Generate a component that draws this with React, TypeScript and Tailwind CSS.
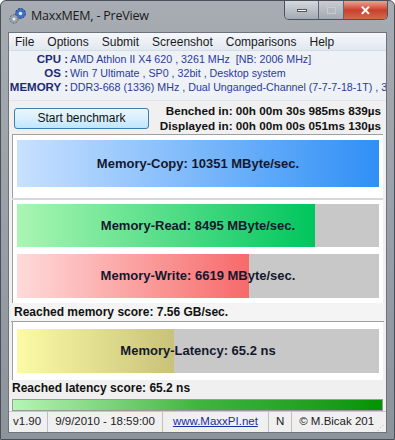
import React from 'react'

const ui = { fontFamily: '"Liberation Sans", Arial, sans-serif' }

function AppIcon() {
  return (
    <svg width="20" height="18" viewBox="0 0 20 18">
      <circle cx="12.5" cy="6.5" r="5" fill="#3d6fc4" stroke="#1d3f86" strokeWidth="1" strokeDasharray="2 1.4" />
      <circle cx="12.5" cy="6.5" r="1.8" fill="#dfe9f8" />
      <circle cx="6" cy="12" r="4.2" fill="#9aa3ad" stroke="#5e6770" strokeWidth="1" strokeDasharray="1.8 1.2" />
      <circle cx="6" cy="12" r="1.5" fill="#e9ecef" />
    </svg>
  )
}

function Bar({ label, pct, from, to, h }: { label: string; pct: number; from: string; to: string; h: string }) {
  return (
    <div className={`relative ${h} bg-[#c8c8c8] flex items-center justify-center`}>
      <div
        className="absolute left-0 top-0 bottom-0"
        style={{ width: `${pct}%`, background: `linear-gradient(to right, ${from}, ${to})` }}
      />
      <span className="relative text-[13px] font-bold text-[#14182e]">{label}</span>
    </div>
  )
}

export default function App() {
  return (
    <div
      className="w-[395px] h-[440px] flex flex-col overflow-hidden rounded-t-[6px] border border-[#4a5058] bg-gradient-to-b from-[#a7acb2] via-[#9aa0a7] to-[#8c939b]"
      style={ui}
    >
      {/* title bar */}
      <div className="h-[30px] flex items-start shrink-0">
        <div className="flex items-center gap-[3px] pl-[7px] pt-[6px]">
          <AppIcon />
          <span className="text-[12.5px] text-[#1a1a1a] tracking-[-0.2px]" style={{ fontFamily: '"Open Sans", sans-serif' }}>
            MaxxMEM, - PreView
          </span>
        </div>
        <div className="ml-auto mr-[6px] flex h-[19px] rounded-b-[5px] border border-t-0 border-[#4b535c] overflow-hidden">
          <div className="w-[34px] flex items-center justify-center bg-gradient-to-b from-[#d5d9de] to-[#a3aab2] border-r border-[#5e666f]">
            <div className="w-[10px] h-[3px] bg-white border border-[#555]" />
          </div>
          <div className="w-[25px] flex items-center justify-center bg-gradient-to-b from-[#c9cdd2] to-[#a4aab1] border-r border-[#5e666f]">
            <div className="w-[9px] h-[7px] border border-[#c8ccd1] bg-[#b4b9bf]" />
          </div>
          <div className="w-[43px] flex items-center justify-center bg-gradient-to-b from-[#e8a394] via-[#c9402c] to-[#d4674f]">
            <span className="text-white text-[13px] font-bold leading-none">✕</span>
          </div>
        </div>
      </div>

      {/* client */}
      <div className="mx-[7px] mt-[1px] flex-1 flex flex-col bg-[#f0f0f0] border border-[#6c737b]">
        {/* menu */}
        <div className="h-[18px] flex items-center gap-[13px] pl-[6px] text-[12px] text-[#1a1a1a] bg-gradient-to-b from-[#f5f8fc] to-[#e2e8f0] border-b border-[#d6dce4]">
          <span>File</span>
          <span>Options</span>
          <span>Submit</span>
          <span>Screenshot</span>
          <span>Comparisons</span>
          <span>Help</span>
        </div>

        {/* system info */}
        <div className="h-[49px] bg-[#eef2f6] pt-[1px] text-[10.7px] leading-[14px]">
          {[
            ['CPU', 'AMD Athlon II X4 620 , 3261 MHz  [NB: 2006 MHz]'],
            ['OS', 'Win 7 Ultimate , SP0 , 32bit , Desktop system'],
            ['MEMORY', 'DDR3-668 (1336) MHz , Dual Unganged-Channel (7-7-7-18-1T) , 3'],
          ].map(([k, v]) => (
            <div key={k} className="flex whitespace-nowrap overflow-hidden">
              <span className="w-[59px] shrink-0 text-right font-bold text-[#1b2a78] text-[11.5px]">{k} :</span>
              <span className="pl-[2px] text-[#2a3a9c] whitespace-pre">{v}</span>
            </div>
          ))}
        </div>

        {/* benchmark row */}
        <div className="h-[34px] flex items-center pl-[5px] pr-[5px] border-t border-[#e2e6ea]">
          <div className="w-[135px] h-[21px] rounded-[3px] border border-[#3c7fb1] bg-gradient-to-b from-[#eaf6fd] via-[#d9f0fc] to-[#bee6fd] flex items-center justify-center text-[12px] text-[#111] mt-[1px]">
            Start benchmark
          </div>
          <div className="ml-auto text-right text-[11.7px] leading-[15px] font-bold text-[#111]">
            <div>Benched in: 00h 00m 30s 985ms 839µs</div>
            <div>Displayed in: 00h 00m 00s 051ms 130µs</div>
          </div>
        </div>

        {/* results */}
        <div className="mx-[3px] flex flex-col">
          <div className="bg-white border-t border-l border-[#a0a0a0] px-[4px] pt-[5px] pb-[11px]">
            <Bar label="Memory-Copy: 10351 MByte/sec." pct={100} from="#c8e1ff" to="#2f8ff6" h="h-[47px]" />
          </div>
          <div className="h-[2px] bg-[#d8d8d8]" />
          <div className="bg-white border-l border-[#a0a0a0] px-[4px] pt-[4px] pb-[5px] flex flex-col gap-[7px]">
            <Bar label="Memory-Read: 8495 MByte/sec." pct={82.2} from="#aaf6b2" to="#00c55e" h="h-[43px]" />
            <Bar label="Memory-Write: 6619 MByte/sec." pct={64.1} from="#ffdada" to="#f76a6a" h="h-[44px]" />
          </div>
        </div>
        <div className="h-[19px] flex items-center pl-[3px] text-[12px] font-bold text-[#111] border-b border-[#a0a0a0] mx-[2px] bg-[#f4f4f4]">
          Reached memory score: 7.56 GB/sec.
        </div>
        <div className="mx-[3px] bg-white border-l border-[#a0a0a0] px-[4px] pt-[7px] pb-[7px]">
          <Bar label="Memory-Latency: 65.2 ns" pct={43.5} from="#fbfba6" to="#c9c27a" h="h-[44px]" />
        </div>
        <div className="h-[16px] flex items-center pl-[3px] text-[12px] font-bold text-[#111]">
          Reached latency score: 65.2 ns
        </div>
        <div className="mx-[3px] mt-[3px] h-[12px] border border-[#9a9a9a] bg-gradient-to-r from-[#b5f5b5] via-[#3fb53f] to-[#009300]" />

        {/* status bar */}
        <div className="mt-auto h-[21px] flex items-center text-[11.5px] text-[#222] border-t border-[#c8c8c8]">
          <div className="pl-[4px] pr-[6px] border-r border-[#c0c0c0] h-full flex items-center">v1.90</div>
          <div className="px-[7px] border-r border-[#c0c0c0] h-full flex items-center">9/9/2010 - 18:59:00</div>
          <div className="px-[10px] border-r border-[#c0c0c0] h-full flex items-center text-[#1f2aa8] underline">www.MaxxPI.net</div>
          <div className="px-[7px] border-r border-[#c0c0c0] h-full flex items-center">N</div>
          <div className="pl-[7px] h-full flex items-center whitespace-nowrap overflow-hidden">© M.Bicak 201</div>
          <div className="ml-auto self-end pr-[2px] pb-[1px] text-[7px] text-[#aaa] leading-none">⋰</div>
        </div>
      </div>
      <div className="h-[7px] shrink-0" />
    </div>
  )
}
